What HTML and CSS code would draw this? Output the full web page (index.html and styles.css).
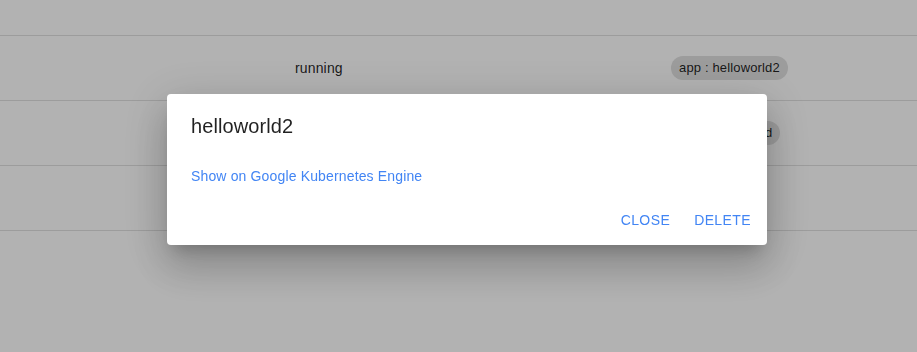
FILE: index.html
```html
<!DOCTYPE html>
<html>
<head>
    <title>Deployments</title>
    <link rel="stylesheet" href="styles.css">
</head>
<body>
    <div class="table">
        <div class="row header"></div>
        <div class="row">
            <div class="cell"></div>
            <div class="cell">running</div>
            <div class="cell"><span class="chip">app : helloworld2</span></div>
        </div>
        <div class="row">
            <div class="cell"></div>
            <div class="cell">running</div>
            <div class="cell"><span class="chip">app : helloworld</span></div>
        </div>
        <div class="row">
            <div class="cell"></div>
            <div class="cell"></div>
            <div class="cell"></div>
        </div>
    </div>

    <div class="overlay">
        <div class="dialog">
            <h2 class="dialog-title">helloworld2</h2>
            <div class="dialog-content">
                <a href="#" class="link">Show on Google Kubernetes Engine</a>
            </div>
            <div class="dialog-actions">
                <button class="button">Close</button>
                <button class="button">Delete</button>
            </div>
        </div>
    </div>
</body>
</html>
```

FILE: styles.css
```css
body {
    margin: 0;
    font-family: "Liberation Sans", Arial, sans-serif;
    font-size: 14px;
    letter-spacing: 0.15px;
    color: rgba(0, 0, 0, 0.87);
    background-color: #fff;
}

.table {
    width: 100%;
}

.row {
    display: grid;
    grid-template-columns: 295px 376px 1fr;
    align-items: center;
    height: 64px;
    border-bottom: 1px solid #e0e0e0;
}

.row.header {
    height: 35px;
}

.cell {
    line-height: 20px;
}

.chip {
    display: inline-block;
    height: 24px;
    line-height: 24px;
    padding: 0 8px;
    border-radius: 12px;
    background-color: #e0e0e0;
    font-size: 13px;
}

.overlay {
    position: fixed;
    top: 0;
    left: 0;
    right: 0;
    bottom: 0;
    background-color: rgba(0, 0, 0, 0.3);
    padding: 94px 0 0 167px;
}

.dialog {
    width: 600px;
    box-sizing: border-box;
    background-color: #fff;
    border-radius: 4px;
    padding-top: 20px;
    box-shadow: 0 11px 15px -7px rgba(0, 0, 0, 0.2),
                0 24px 38px 3px rgba(0, 0, 0, 0.14),
                0 9px 46px 8px rgba(0, 0, 0, 0.12);
}

.dialog-title {
    margin: 0;
    padding: 0 24px;
    font-size: 20px;
    font-weight: normal;
    line-height: 24px;
    letter-spacing: 0.1px;
    color: rgba(0, 0, 0, 0.87);
}

.dialog-content {
    margin-top: 28px;
    padding: 0 24px;
    line-height: 20px;
}

.link {
    color: #4285f4;
    text-decoration: none;
}

.dialog-actions {
    display: flex;
    justify-content: flex-end;
    margin-top: 8px;
    padding: 8px 8px 7px;
}

.button {
    height: 36px;
    margin-left: 8px;
    padding: 0 8px;
    border: none;
    background: none;
    font-family: inherit;
    font-size: 14px;
    line-height: 20px;
    letter-spacing: 0.4px;
    text-transform: uppercase;
    color: #4285f4;
    cursor: pointer;
}
```
